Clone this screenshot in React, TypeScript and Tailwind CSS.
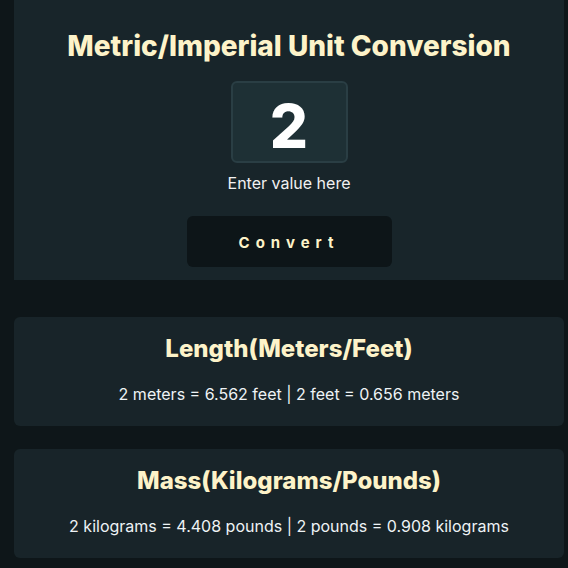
const results = [
  {
    title: 'Length(Meters/Feet)',
    left: '2 meters = 6.562 feet',
    right: '2 feet = 0.656 meters',
  },
  {
    title: 'Mass(Kilograms/Pounds)',
    left: '2 kilograms = 4.408 pounds',
    right: '2 pounds = 0.908 kilograms',
  },
];

export default function App() {
  return (
    <div className="min-h-screen bg-[#0e1619] font-['Inter',sans-serif]">
      <div className="ml-[14px] w-[550px]">
        {/* Input panel */}
        <div className="flex flex-col items-center bg-[#18252a] pt-[30px] pb-[13px]">
          <h1 className="text-[28px] font-extrabold leading-[32px] text-[#fdf3c9]">
            Metric/Imperial Unit Conversion
          </h1>
          <div className="mt-[19px] flex h-[82px] w-[117px] items-center justify-center rounded-md border-2 border-[#2a3e44] bg-[#1e3035] pt-[8px]">
            <span className="text-[60px] font-extrabold leading-none text-white">2</span>
          </div>
          <p className="mt-[11px] text-[16px] leading-[19px] text-[#f1f1f1]">Enter value here</p>
          <button className="mt-[23px] h-[51px] w-[205px] rounded-md bg-[#0d1518] pt-[3px] text-[15px] font-bold tracking-[0.4em] text-[#fdf3c9]">
            Convert
          </button>
        </div>

        {/* Results */}
        <div className="mt-[37px] flex flex-col gap-[23px]">
          {results.map((r) => (
            <div
              key={r.title}
              className="flex h-[109px] flex-col items-center rounded-md bg-[#182429] pt-[18px]"
            >
              <h2 className="text-[24px] font-extrabold leading-[28px] text-[#fdf3c9]">{r.title}</h2>
              <p className="mt-[21px] text-[16px] leading-[20px] text-[#eef3f5]">
                {r.left} | {r.right}
              </p>
            </div>
          ))}
        </div>
      </div>
    </div>
  );
}
